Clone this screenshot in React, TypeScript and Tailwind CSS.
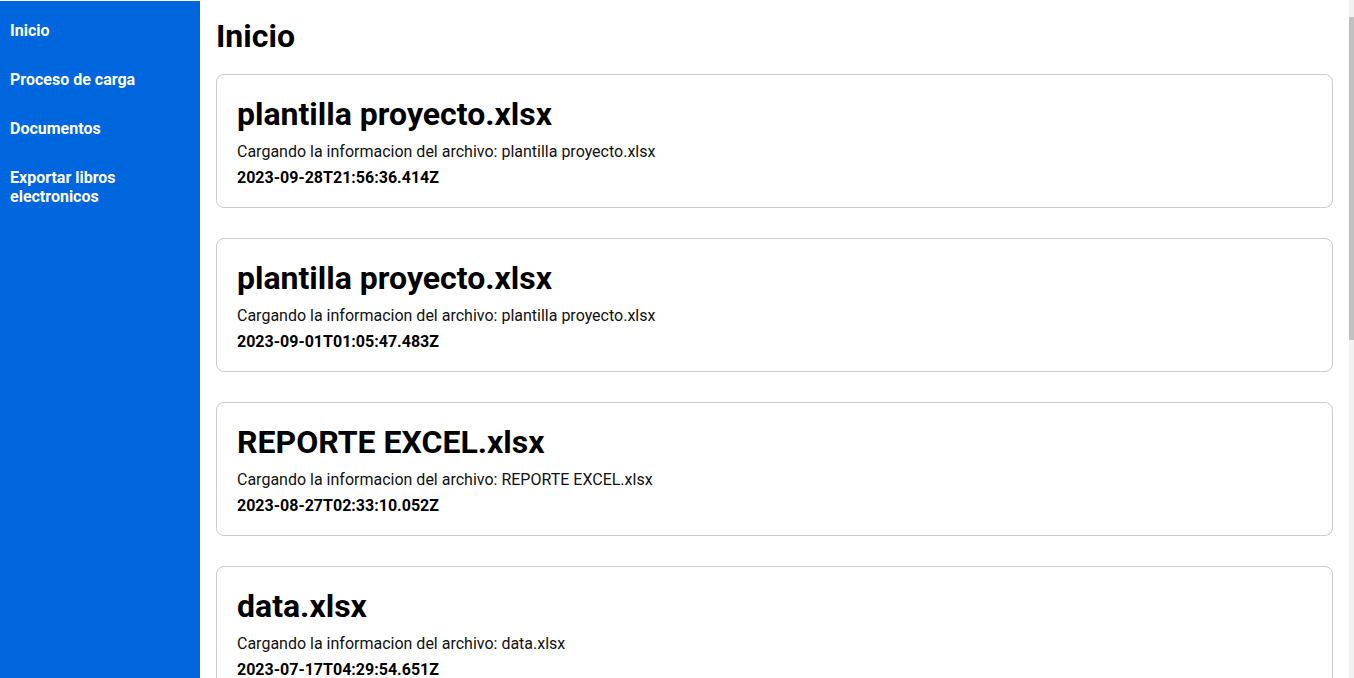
const menu = ["Inicio", "Proceso de carga", "Documentos", "Exportar libros electronicos"];

const archivos = [
  { nombre: "plantilla proyecto.xlsx", fecha: "2023-09-28T21:56:36.414Z" },
  { nombre: "plantilla proyecto.xlsx", fecha: "2023-09-01T01:05:47.483Z" },
  { nombre: "REPORTE EXCEL.xlsx", fecha: "2023-08-27T02:33:10.052Z" },
  { nombre: "data.xlsx", fecha: "2023-07-17T04:29:54.651Z" },
  { nombre: "data.xlsx", fecha: "2023-07-10T18:12:03.220Z" },
  { nombre: "REPORTE EXCEL.xlsx", fecha: "2023-06-30T15:47:21.908Z" },
  { nombre: "plantilla proyecto.xlsx", fecha: "2023-06-02T09:20:11.137Z" },
  { nombre: "data.xlsx", fecha: "2023-05-19T22:03:45.770Z" },
];

const Sidebar = () => (
  <aside className="w-[200px] shrink-0 mt-px bg-[#0066dd] px-[10px] pt-[20px]">
    <nav className="flex flex-col gap-[30px]">
      {menu.map((item) => (
        <a key={item} href="#" className="text-white font-bold text-[16px] leading-[19px] w-[150px]">
          {item}
        </a>
      ))}
    </nav>
  </aside>
);

const Card = ({ nombre, fecha }: { nombre: string; fecha: string }) => (
  <div className="border border-[#cccccc] rounded-[8px] px-[20px] pt-[20px] pb-[20px] bg-white">
    <h2 className="text-[32px] leading-[38px] font-bold text-black">{nombre}</h2>
    <p className="mt-[9px] text-[16px] leading-[19px] text-[#111]">
      Cargando la informacion del archivo: {nombre}
    </p>
    <p className="mt-[7px] text-[16px] leading-[19px] font-bold text-black">{fecha}</p>
  </div>
);

// barra de desplazamiento fina como en la captura
const Scrollbar = () => (
  <div className="w-[5px] shrink-0 bg-[#f1f1f1] pt-[17px]">
    <div className="h-[323px] bg-[#c1c1c1]" />
  </div>
);

const App = () => {
  return (
    <div className="flex h-[678px] bg-white font-['Roboto',sans-serif]">
      <Sidebar />
      <main className="flex-1 overflow-hidden px-4 pt-[17px] pb-4">
        <h1 className="text-[32px] leading-[38px] font-bold text-black mb-[19px]">Inicio</h1>
        <div className="flex flex-col gap-[30px]">
          {archivos.map((a, i) => (
            <Card key={i} nombre={a.nombre} fecha={a.fecha} />
          ))}
        </div>
      </main>
      <Scrollbar />
    </div>
  );
};

export default App;
